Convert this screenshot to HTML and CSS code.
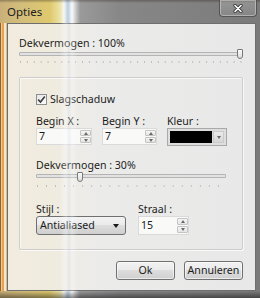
FILE: index.html
```html
<!DOCTYPE html>
<html lang="nl">
<head>
    <meta charset="UTF-8">
    <title>Opties</title>
    <link rel="stylesheet" href="styles.css">
</head>
<body>
    <div class="window">
        <div class="titlebar">
            <div class="title">Opties</div>
            <div class="close">
                <svg width="10" height="9" viewBox="0 0 10 9">
                    <path d="M2 1.5 L8 7.5 M8 1.5 L2 7.5" stroke="#3a3a3a" stroke-width="3.2" stroke-linecap="round"/>
                    <path d="M2 1.5 L8 7.5 M8 1.5 L2 7.5" stroke="#fff" stroke-width="1.6" stroke-linecap="round"/>
                </svg>
            </div>
        </div>

        <div class="client">
            <div class="label">Dekvermogen : 100%</div>
            <div class="slider">
                <div class="track"></div>
                <div class="thumb thumb-end"></div>
                <div class="ticks ticks-fine"></div>
            </div>

            <div class="group">
                <div class="check">
                    <span class="box">
                        <svg width="9" height="9" viewBox="0 0 9 9">
                            <path d="M1.2 4.6 L3.5 7 L7.8 1.4" fill="none" stroke="#3c3c3c" stroke-width="1.6"/>
                        </svg>
                    </span>
                    Slagschaduw
                </div>

                <div class="fields">
                    <div class="field">
                        <div class="label">Begin X :</div>
                        <div class="spin">
                            <span class="spin-value">7</span>
                            <span class="spin-btns">
                                <span class="spin-btn"><i class="up"></i></span>
                                <span class="spin-btn"><i class="down"></i></span>
                            </span>
                        </div>
                    </div>
                    <div class="field">
                        <div class="label">Begin Y :</div>
                        <div class="spin">
                            <span class="spin-value">7</span>
                            <span class="spin-btns">
                                <span class="spin-btn"><i class="up"></i></span>
                                <span class="spin-btn"><i class="down"></i></span>
                            </span>
                        </div>
                    </div>
                    <div class="field">
                        <div class="label">Kleur :</div>
                        <div class="color-combo">
                            <span class="swatch"></span>
                            <span class="color-btn"><i class="down"></i></span>
                        </div>
                    </div>
                </div>

                <div class="label label-opacity">Dekvermogen : 30%</div>
                <div class="slider slider-small">
                    <div class="track"></div>
                    <div class="thumb thumb-30"></div>
                    <div class="ticks ticks-wide"></div>
                </div>

                <div class="fields fields-bottom">
                    <div class="field">
                        <div class="label">Stijl :</div>
                        <div class="dropdown">
                            <span>Antialiased</span>
                            <i class="arrow"></i>
                        </div>
                    </div>
                    <div class="field">
                        <div class="label">Straal :</div>
                        <div class="spin spin-tall">
                            <span class="spin-value">15</span>
                            <span class="spin-btns">
                                <span class="spin-btn"><i class="up"></i></span>
                                <span class="spin-btn"><i class="down"></i></span>
                            </span>
                        </div>
                    </div>
                </div>
            </div>

            <div class="buttons">
                <div class="button">Ok</div>
                <div class="button">Annuleren</div>
            </div>
        </div>

        <div class="streak"></div>
    </div>
</body>
</html>
```

FILE: styles.css
```css
* {
    margin: 0;
    padding: 0;
    box-sizing: border-box;
}

body {
    width: 260px;
    height: 298px;
    overflow: hidden;
    font-family: "Noto Sans", "Open Sans", sans-serif;
    font-size: 10.6px;
    color: #1c1c1c;
}

.window {
    position: relative;
    width: 260px;
    height: 298px;
    padding-bottom: 7px;
    background:
        linear-gradient(to bottom, rgba(40, 30, 20, 0.35) 0, rgba(0, 0, 0, 0) 3px, rgba(0, 0, 0, 0) 291px, rgba(0, 0, 0, 0.45) 298px),
        linear-gradient(90deg, #c9b07a 0, #d3bd7c 20px, #dfc96e 50px, #ece3a8 60px, #f7f7f2 64px, #b9cde0 68px, #fafafa 72px, #c8c8c8 76px, #9a9a9a 80px, #878787 120px, #808080 200px, #7a7a7a 260px);
}

.titlebar {
    height: 23px;
    display: flex;
    align-items: center;
    justify-content: space-between;
    padding-left: 7px;
    padding-right: 3px;
}

.title {
    font-size: 11.5px;
    color: #202020;
}

.close {
    align-self: flex-start;
    width: 38px;
    height: 17px;
    display: flex;
    align-items: center;
    justify-content: center;
    border: 1px solid rgba(70, 70, 70, 0.8);
    border-top: none;
    border-radius: 0 0 4px 4px;
    background: linear-gradient(rgba(255, 255, 255, 0.2), rgba(255, 255, 255, 0.08));
    box-shadow: inset 0 0 0 1px rgba(255, 255, 255, 0.35);
}

.client {
    margin-left: 7px;
    margin-right: 4px;
    height: 268px;
    padding: 12px 0 0 11px;
    border: 1px solid #6e6e6e;
    background: linear-gradient(90deg, #f1ecdf 0, #f0ebdf 45px, #eeece6 62px, #ebebea 90px, #e8e8e8 100%);
    box-shadow: -1px 0 0 #cdbb95, -3px 0 0 #f4e6c8, -5px 0 0 #e7a154, -6px 0 0 #f2c98e, -7px 0 0 #8a6434;
}

.label {
    line-height: 15px;
    white-space: nowrap;
}

.slider {
    position: relative;
    width: 224px;
    height: 14px;
}

.track {
    position: absolute;
    top: 1px;
    left: 0;
    right: 0;
    height: 4px;
    border: 1px solid #b4b4b4;
    border-radius: 1px;
    background: #e2e2e2;
}

.thumb {
    position: absolute;
    top: -2px;
    width: 6px;
    height: 10px;
    border: 1px solid #777;
    border-radius: 1px 1px 3px 3px;
    background: linear-gradient(#fbfbfb, #dcdcdc);
}

.thumb-end {
    right: 0;
}

.ticks {
    position: absolute;
    left: 1px;
    right: 1px;
    top: 10px;
    height: 2px;
    background-image: linear-gradient(90deg, #bdbdbd 1px, transparent 1px);
    background-repeat: repeat-x;
}

.ticks-fine {
    background-size: 6.9px 2px;
}

.group {
    width: 224px;
    margin-top: 12px;
    padding: 14px 16px 14px 16px;
    border: 1px solid #cdcdcd;
    border-radius: 2px;
    box-shadow: inset 1px 1px 0 rgba(255, 255, 255, 0.7), 1px 1px 0 rgba(255, 255, 255, 0.7);
}

.check {
    display: flex;
    align-items: center;
    gap: 3px;
    line-height: 15px;
}

.box {
    width: 11px;
    height: 11px;
    display: flex;
    align-items: center;
    justify-content: center;
    border: 1px solid #8e8f8f;
    background: linear-gradient(135deg, #e6e6e6, #fbfbfb);
}

.fields {
    display: grid;
    grid-template-columns: 56px 55px 60px;
    column-gap: 10px;
    margin-top: 7px;
}

.field .label {
    line-height: 14px;
}

.spin {
    display: flex;
    height: 17px;
    border: 1px solid #dadada;
    background: #f9f9f8;
}

.spin-value {
    flex: 1;
    padding-left: 2px;
    line-height: 15px;
}

.spin-btns {
    width: 11px;
    display: flex;
    flex-direction: column;
    gap: 1px;
    padding: 1px 0;
}

.spin-btn {
    flex: 1;
    display: flex;
    align-items: center;
    justify-content: center;
    border: 1px solid #c4c4c4;
    border-radius: 1px;
    background: linear-gradient(#f6f6f6, #e4e4e4);
}

.up, .down {
    width: 0;
    height: 0;
    border-left: 2.5px solid transparent;
    border-right: 2.5px solid transparent;
}

.up {
    border-bottom: 3px solid #6a6a6a;
}

.down {
    border-top: 3px solid #6a6a6a;
}

.color-combo {
    display: flex;
    height: 18px;
    padding: 2px;
    gap: 1px;
    border: 1px solid #a9a9a9;
    background: #dedede;
}

.swatch {
    flex: 1;
    background: #000;
}

.color-btn {
    width: 11px;
    display: flex;
    align-items: center;
    justify-content: center;
    border: 1px solid #cacaca;
    background: linear-gradient(#ececec, #d6d6d6);
}

.label-opacity {
    margin-top: 12px;
    line-height: 14px;
}

.slider-small {
    width: 190px;
    height: 15px;
}

.slider-small .track {
    top: 2px;
}

.slider-small .thumb {
    top: 0;
}

.thumb-30 {
    left: 41px;
}

.slider-small .ticks {
    top: 13px;
}

.ticks-wide {
    background-size: 9.05px 2px;
}

.fields-bottom {
    grid-template-columns: 90px 51px;
    column-gap: 12px;
    margin-top: 15px;
}

.dropdown {
    display: flex;
    align-items: center;
    justify-content: space-between;
    height: 19px;
    padding: 0 6px 0 3px;
    border: 1px solid #707070;
    border-radius: 3px;
    background: linear-gradient(#f2f2f2 0, #ebebeb 45%, #dddddd 50%, #cfcfcf 100%);
    line-height: 15px;
}

.arrow {
    width: 0;
    height: 0;
    border-left: 3.5px solid transparent;
    border-right: 3.5px solid transparent;
    border-top: 4px solid #1a1a1a;
}

.spin-tall {
    height: 19px;
}

.spin-tall .spin-value {
    line-height: 17px;
}

.buttons {
    display: flex;
    justify-content: flex-end;
    gap: 9px;
    width: 224px;
    margin-top: 11px;
}

.button {
    width: 59px;
    height: 19px;
    line-height: 17px;
    text-align: center;
    border: 1px solid #707070;
    border-radius: 3px;
    background: linear-gradient(#f2f2f2 0, #ebebeb 45%, #dddddd 50%, #cfcfcf 100%);
    box-shadow: inset 0 0 0 1px rgba(255, 255, 255, 0.6);
}

.streak {
    position: absolute;
    top: 23px;
    bottom: 7px;
    left: 60px;
    width: 18px;
    pointer-events: none;
    background: linear-gradient(90deg, rgba(255, 255, 255, 0) 0, rgba(255, 255, 255, 0.35) 6px, rgba(200, 220, 235, 0.25) 9px, rgba(255, 255, 255, 0.3) 12px, rgba(255, 255, 255, 0) 18px);
}
```
